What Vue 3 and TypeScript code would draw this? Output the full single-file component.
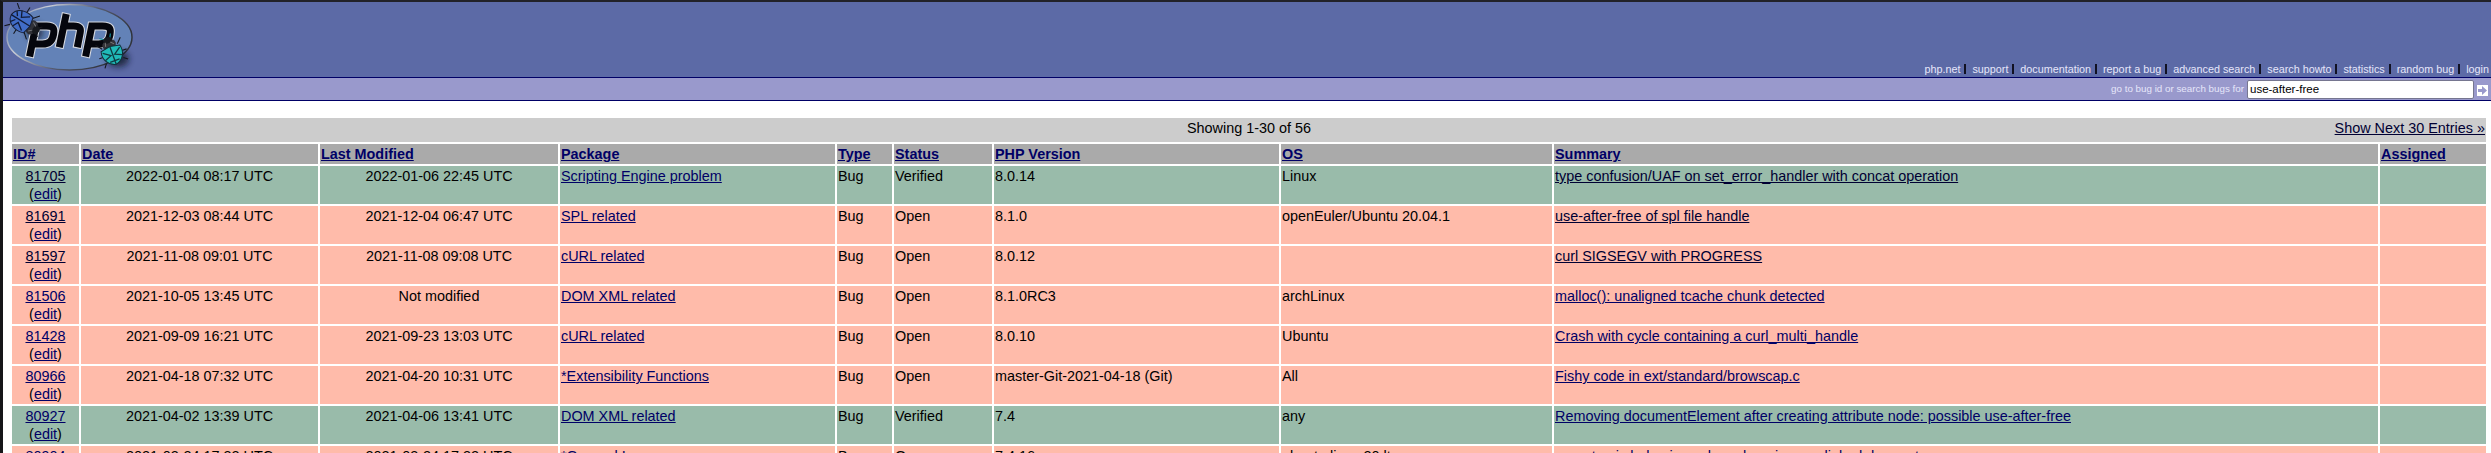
<script setup lang="ts">
interface Bug {
  id: number
  date: string
  modified: string
  pkg: string
  status: 'Open' | 'Verified'
  version: string
  os: string
  summary: string
  visited?: boolean
}

const links = ['php.net', 'support', 'documentation', 'report a bug', 'advanced search', 'search howto', 'statistics', 'random bug', 'login']
const headers = ['ID#', 'Date', 'Last Modified', 'Package', 'Type', 'Status', 'PHP Version', 'OS', 'Summary', 'Assigned']

const bugs: Bug[] = [
  { id: 81705, date: '2022-01-04 08:17 UTC', modified: '2022-01-06 22:45 UTC', pkg: 'Scripting Engine problem', status: 'Verified', version: '8.0.14', os: 'Linux', summary: 'type confusion/UAF on set_error_handler with concat operation', visited: true },
  { id: 81691, date: '2021-12-03 08:44 UTC', modified: '2021-12-04 06:47 UTC', pkg: 'SPL related', status: 'Open', version: '8.1.0', os: 'openEuler/Ubuntu 20.04.1', summary: 'use-after-free of spl file handle', visited: true },
  { id: 81597, date: '2021-11-08 09:01 UTC', modified: '2021-11-08 09:08 UTC', pkg: 'cURL related', status: 'Open', version: '8.0.12', os: '', summary: 'curl SIGSEGV with PROGRESS', visited: true },
  { id: 81506, date: '2021-10-05 13:45 UTC', modified: 'Not modified', pkg: 'DOM XML related', status: 'Open', version: '8.1.0RC3', os: 'archLinux', summary: 'malloc(): unaligned tcache chunk detected' },
  { id: 81428, date: '2021-09-09 16:21 UTC', modified: '2021-09-23 13:03 UTC', pkg: 'cURL related', status: 'Open', version: '8.0.10', os: 'Ubuntu', summary: 'Crash with cycle containing a curl_multi_handle' },
  { id: 80966, date: '2021-04-18 07:32 UTC', modified: '2021-04-20 10:31 UTC', pkg: '*Extensibility Functions', status: 'Open', version: 'master-Git-2021-04-18 (Git)', os: 'All', summary: 'Fishy code in ext/standard/browscap.c' },
  { id: 80927, date: '2021-04-02 13:39 UTC', modified: '2021-04-06 13:41 UTC', pkg: 'DOM XML related', status: 'Verified', version: '7.4', os: 'any', summary: 'Removing documentElement after creating attribute node: possible use-after-free' },
  { id: 80904, date: '2021-03-24 17:32 UTC', modified: '2021-03-24 17:32 UTC', pkg: '*General Issues', status: 'Open', version: '7.4.16', os: 'ubuntu linux 20 lts', summary: 'non-atomic behaviour when changing symlinked doc-root' },
]
</script>

<template>
  <div class="page">
    <header class="top">
      <svg class="logo" width="134" height="74" viewBox="0 0 134 74" aria-label="php">
        <defs>
          <linearGradient id="rim" x1="0" y1="0" x2="1" y2=".4">
            <stop offset="0" stop-color="#50658f" />
            <stop offset=".3" stop-color="#c8ccd6" />
            <stop offset=".65" stop-color="#555c70" />
            <stop offset="1" stop-color="#30333b" />
          </linearGradient>
          <filter id="soft" x="-50%" y="-50%" width="200%" height="200%"><feGaussianBlur stdDeviation="3" /></filter>
        </defs>
        <ellipse cx="66.500" cy="35.300" rx="62.500" ry="32.700" fill="#6382b7" stroke="url(#rim)" stroke-width="1.500" />
        <ellipse cx="32" cy="30" rx="8" ry="9" fill="#101828" opacity=".7" filter="url(#soft)" />
        <ellipse cx="115" cy="57" rx="11" ry="8" fill="#101828" opacity=".75" filter="url(#soft)" />
        <g v-for="pass in 2" :key="pass" :class="pass === 1 ? 'halo' : 'ink'">
          <path d="M27.300 51 32.800 24H43.500C51 24 51.500 27 50.500 32.500C49.300 39 46.500 42 39.500 42H33" />
          <path d="M62.500 15.500 57 41.800M62 24H70.500C77 24 78 26.500 77.200 30.500L75 41.800" />
          <path d="M83.300 51 88.800 24H99.500C107.500 24 108 27 107 32.500C105.800 39 102.500 42 95.500 42H89" />
        </g>
        <g transform="translate(18.500 19) rotate(-58)">
          <path d="M-9-8-13-12M-10 0H-15M-8 8-13 14M9-8 13-13M10 0H16M8 8 14 13M-3 18-5 22M3 18 6 21" stroke="#15171d" stroke-width="1.100" fill="none" />
          <ellipse cx="0" cy="12" rx="7.500" ry="5.500" fill="#303138" />
          <ellipse cx="0" cy="17" rx="4.500" ry="3.500" fill="#17191e" />
          <path d="M-9 8C-12-1-9-11 0-12C9-11 12-1 9 8L0 10Z" fill="#416cc7" stroke="#172036" />
          <path d="M0-12V10M-9-5-3-2-8 5M9-5 3-2 8 5M-6-9-2-6M6-9 2-6" stroke="#111b36" stroke-width="1.300" fill="none" />
          <path d="M-5 11-2 14M5 11 3 15" stroke="#74757a" />
        </g>
        <g transform="translate(109.500 52) rotate(160)">
          <path d="M-9-7-13-10M-10 0H-15M-8 8-13 13M9-7 12-11M10 0H14M8 8 13 14" stroke="#15171d" stroke-width="1.100" fill="none" />
          <path d="M-3 16-5 20M3 16 7 19" stroke="#148f9b" stroke-width="1.200" />
          <ellipse cx="0" cy="10" rx="7" ry="5" fill="#34343a" />
          <ellipse cx="0" cy="14.500" rx="4.500" ry="3" fill="#17191e" />
          <path d="M-10 6C-12-2-8-9 0-11C8-9 12-2 10 6L0 8Z" fill="#20bab8" stroke="#102f38" />
          <path d="M0-11V8M-9-4-2-1-9 4M9-4 2-1 9 4M-5-7 5-7" stroke="#103b42" stroke-width="1.300" fill="none" />
          <path d="M-5 9-2 12M4 9 3 13" stroke="#777" />
        </g>
      </svg>
      <nav class="links">
        <template v-for="(link, i) in links" :key="link">
          <a>{{ link }}</a><i v-if="i < links.length - 1" class="sep"></i>
        </template>
      </nav>
    </header>
    <div class="search">
      <label for="q">go to bug id or search bugs for</label>
      <input id="q" type="text" value="use-after-free">
      <svg class="go" width="11" height="11" viewBox="0 0 11 11">
        <rect width="11" height="11" fill="#fff" />
        <path d="M1 4H5V1L10 5.500 5 10V7H1Z" fill="#9999cc" />
      </svg>
    </div>
    <main>
      <div class="pager">
        <span></span><span>Showing 1-30 of 56</span><a class="visited">Show Next 30 Entries »</a>
      </div>
      <div class="row head">
        <div v-for="h in headers" :key="h"><a>{{ h }}</a></div>
      </div>
      <div v-for="bug in bugs" :key="bug.id" class="row" :class="bug.status.toLowerCase()">
        <div class="mid"><a :class="{ visited: bug.visited }">{{ bug.id }}</a><br>(<a>edit</a>)</div>
        <div class="mid">{{ bug.date }}</div>
        <div class="mid">{{ bug.modified }}</div>
        <div><a>{{ bug.pkg }}</a></div>
        <div>Bug</div>
        <div>{{ bug.status }}</div>
        <div>{{ bug.version }}</div>
        <div>{{ bug.os }}</div>
        <div><a :class="{ visited: bug.visited }">{{ bug.summary }}</a></div>
        <div></div>
      </div>
    </main>
  </div>
</template>

<style>
body { overflow: hidden; }
</style>

<style scoped>
.page {
  box-sizing: border-box;
  height: 453px;
  overflow: hidden;
  border-top: 2px solid #222228;
  border-left: 3px solid #161618;
  background: #fff;
  color: #000;
  font: 14.4px/18px "Liberation Sans", Arial, sans-serif;
}
.top {
  box-sizing: border-box;
  height: 76px;
  display: flex;
  justify-content: space-between;
  align-items: flex-end;
  padding-right: 2px;
  background: #5c6aa6;
  border-bottom: 1px solid #000066;
}
.logo { align-self: flex-start; }
.halo, .ink { fill: none; stroke-linecap: square; }
.halo { stroke: #d6d9e0; stroke-width: 9.2; }
.ink { stroke: #05060d; stroke-width: 7; }
.links {
  display: flex;
  align-items: center;
  height: 16px;
  font-size: 10.8px;
  line-height: 16px;
  color: #e6e6fa;
}
.sep { width: 2px; height: 10px; margin: 0 6px 0 3.9px; background: #111122; }
.search {
  box-sizing: border-box;
  height: 23px;
  display: flex;
  align-items: center;
  justify-content: flex-end;
  padding-right: 3px;
  background: #9999cc;
  border-bottom: 1px solid #000066;
  color: #e6e6fa;
  font-size: 9.8px;
}
input {
  box-sizing: border-box;
  width: 227px;
  height: 19px;
  margin: 0 3px;
  padding: 0 2px;
  border: 1px solid #767690;
  border-radius: 2px;
  background: #fff;
  color: #000;
  font: 11.5px "Liberation Sans", Arial, sans-serif;
}
.go { margin-top: 2px; }
main { padding: 17px 5px 0 9px; display: grid; gap: 2px; }
.pager {
  box-sizing: border-box;
  height: 24px;
  display: grid;
  grid-template-columns: 1fr auto 1fr;
  padding: 1px;
  background: #ccc;
}
.pager a { justify-self: end; }
.row {
  display: grid;
  height: 38px;
  grid-template-columns: 67px 237px 238px 275px 55px 98px 285px 271px 824px 106px;
  column-gap: 2px;
}
.row > div { box-sizing: border-box; padding: 1px; white-space: nowrap; }
.head { height: 20px; font-weight: bold; }
.head > div { background: #aaa; }
.open > div { background: #ffbbaa; }
.verified > div { background: #99bbaa; }
.mid { text-align: center; }
main a { color: #000066; text-decoration: underline; }
main a.visited { color: #000033; }
</style>
